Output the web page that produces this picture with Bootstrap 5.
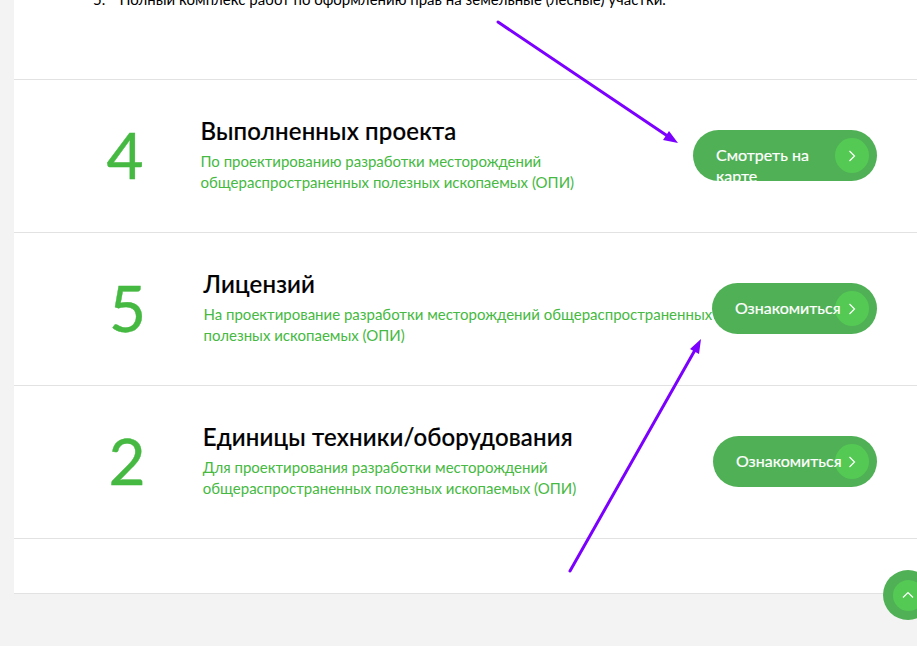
<!DOCTYPE html>
<html lang="ru">
<head>
<meta charset="utf-8">
<meta name="viewport" content="width=device-width, initial-scale=1">
<title>Проекты</title>
<link href="https://cdn.jsdelivr.net/npm/bootstrap@5.3.0/dist/css/bootstrap.min.css" rel="stylesheet">
<style>
body{font-family:Lato,"Open Sans",sans-serif;background:#f3f3f3;color:#000;height:646px;overflow:hidden;font-size:15px;line-height:21px}
.sheet{margin-left:14px;height:594px;border-bottom:1px solid #e2e2e2}
.intro{height:79px;padding-left:79px}
.intro-line{margin-top:-11px;white-space:nowrap}
.intro-num{width:26.5px}
.stat{height:153px;border-top:1px solid #e2e2e2;padding-right:40px}
.stat-last{height:154px;border-bottom:1px solid #e2e2e2}
.num{font-size:64px;line-height:64px;color:#45b941;padding-top:43px;-webkit-text-stroke:.4px #45b941}
.txt{padding-top:35px;color:#45b941;white-space:nowrap;min-width:0}
.txt h2{font-size:24px;line-height:32px;font-weight:500;color:#000;margin:0 0 4px;-webkit-text-stroke:.2px #000;letter-spacing:.16px}
.n4{padding-left:92.5px;width:186.5px}.n5{padding-left:95px;width:189.5px}.n2{padding-left:94.5px;width:188.7px}
.pill{height:51px;border-radius:26px;background:#50b055;color:#fff;font-size:16px;line-height:21px;padding:14px 0 0 23px;margin-top:50px;overflow:hidden;-webkit-text-stroke:.2px #fff}
.w4{width:184px}.w5{width:165px}.w2{width:164px}
.pill-label{z-index:1;width:106px}
.dot{width:34px;height:35px;right:8px;top:8px;background:#54c954}
.up{width:50px;height:50px;left:883px;top:570px;background:#50b055}
.up-in{width:31px;height:31px;background:#54c954}
</style>
</head>
<body class="position-relative">
<main class="sheet bg-white overflow-hidden">
<div class="intro d-flex align-items-start"><div class="intro-line d-flex"><span class="intro-num">5.</span><span class="intro-text">Полный комплекс работ по оформлению прав на земельные (лесные) участки.</span></div></div>
<section class="stat d-flex"><div class="num n4 flex-shrink-0">4</div><div class="txt"><h2>Выполненных проекта</h2><div>По проектированию разработки месторождений<br>общераспространенных полезных ископаемых (ОПИ)</div></div>
<a class="pill w4 d-block text-decoration-none position-relative ms-auto flex-shrink-0"><span class="pill-label d-block position-relative">Смотреть на карте</span><span class="dot rounded-circle position-absolute d-flex align-items-center justify-content-center"><svg width="8" height="12" viewBox="0 0 8 12" fill="none" stroke="#fff" stroke-width="1.2"><path d="M1.5 1l5 5-5 5"/></svg></span></a></section>
<section class="stat d-flex"><div class="num n5 flex-shrink-0">5</div><div class="txt"><h2>Лицензий</h2><div>На проектирование разработки месторождений общераспространенных<br>полезных ископаемых (ОПИ)</div></div>
<a class="pill w5 d-block text-decoration-none position-relative ms-auto flex-shrink-0"><span class="pill-label d-block position-relative">Ознакомиться</span><span class="dot rounded-circle position-absolute d-flex align-items-center justify-content-center"><svg width="8" height="12" viewBox="0 0 8 12" fill="none" stroke="#fff" stroke-width="1.2"><path d="M1.5 1l5 5-5 5"/></svg></span></a></section>
<section class="stat stat-last d-flex"><div class="num n2 flex-shrink-0">2</div><div class="txt"><h2>Единицы техники/оборудования</h2><div>Для проектирования разработки месторождений<br>общераспространенных полезных ископаемых (ОПИ)</div></div>
<a class="pill w2 d-block text-decoration-none position-relative ms-auto flex-shrink-0"><span class="pill-label d-block position-relative">Ознакомиться</span><span class="dot rounded-circle position-absolute d-flex align-items-center justify-content-center"><svg width="8" height="12" viewBox="0 0 8 12" fill="none" stroke="#fff" stroke-width="1.2"><path d="M1.5 1l5 5-5 5"/></svg></span></a></section>
</main>
<a class="up rounded-circle position-absolute d-flex align-items-center justify-content-center"><span class="up-in rounded-circle d-flex align-items-center justify-content-center"><svg width="12" height="8" viewBox="0 0 12 8" fill="none" stroke="#fff" stroke-width="1.2"><path d="M1 6.5l5-5 5 5"/></svg></span></a>
<svg class="position-absolute top-0 start-0 pe-none" width="917" height="646" fill="#7b00ff" stroke="#7b00ff"><path d="M498 22L669 137M570 571L695 350" stroke-width="3" stroke-linecap="round"/><path d="M678 143l-15-3 6-9zM701 339l-2 15-9-5z" stroke="none"/></svg>
<script src="https://cdn.jsdelivr.net/npm/bootstrap@5.3.0/dist/js/bootstrap.bundle.min.js"></script>
</body>
</html>
